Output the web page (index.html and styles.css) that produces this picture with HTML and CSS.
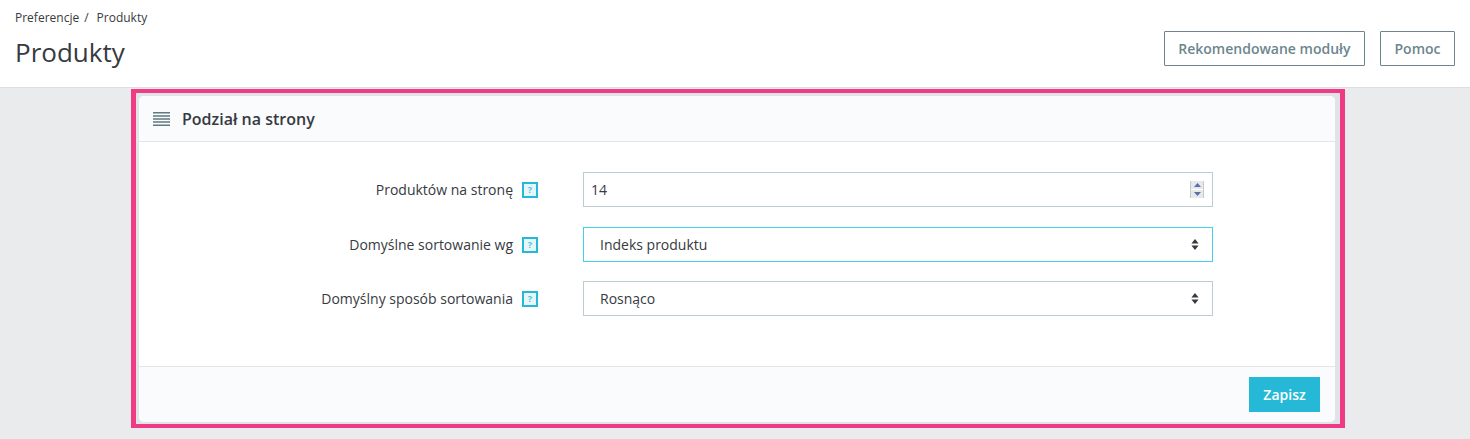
FILE: index.html
```html
<!DOCTYPE html>
<html lang="pl">
<head>
<meta charset="utf-8">
<title>Produkty</title>
<link rel="stylesheet" href="styles.css">
</head>
<body>
<header class="topbar">
  <div class="topbar-left">
    <nav class="crumbs"><span>Preferencje</span><span class="sep">/</span><span>Produkty</span></nav>
    <h1 class="title">Produkty</h1>
  </div>
  <div class="actions">
    <a class="btn-outline">Rekomendowane moduły</a>
    <a class="btn-outline">Pomoc</a>
  </div>
</header>
<main class="content">
  <div class="frame">
    <section class="card">
      <div class="card-head">
        <svg class="head-icon" width="17" height="14" viewBox="0 0 17 14"><path d="M0 .8h17M0 3.9h17M0 7h17M0 10.1h17M0 13.2h17" stroke="#5f7a83" stroke-width="1.5" fill="none"/></svg>
        <h2 class="card-title">Podział na strony</h2>
      </div>
      <div class="card-body">
        <div class="row">
          <label class="lbl">Produktów na stronę<span class="help">?</span></label>
          <div class="field number">
            <span class="val-num">14</span>
            <span class="spin"><span class="spin-b"><svg width="7" height="4" viewBox="0 0 7 4"><path d="M3.5 0L7 4H0z" fill="#5a6fa8"/></svg></span><span class="spin-b"><svg width="7" height="4" viewBox="0 0 7 4"><path d="M3.5 4L7 0H0z" fill="#5a6fa8"/></svg></span></span>
          </div>
        </div>
        <div class="row">
          <label class="lbl">Domyślne sortowanie wg<span class="help">?</span></label>
          <div class="field select focus"><span>Indeks produktu</span><svg class="updown" width="8" height="11" viewBox="0 0 8 11"><path d="M4 0l3.6 4.4H.4zM4 11L.4 6.6h7.2z" fill="#363a41"/></svg></div>
        </div>
        <div class="row last">
          <label class="lbl">Domyślny sposób sortowania<span class="help">?</span></label>
          <div class="field select"><span>Rosnąco</span><svg class="updown" width="8" height="11" viewBox="0 0 8 11"><path d="M4 0l3.6 4.4H.4zM4 11L.4 6.6h7.2z" fill="#363a41"/></svg></div>
        </div>
      </div>
      <div class="card-foot"><button class="btn-save" type="button">Zapisz</button></div>
    </section>
  </div>
</main>
</body>
</html>
```
FILE: styles.css
```css
* { box-sizing: border-box; }
html, body { margin: 0; height: 100%; }
body {
  background: #eaebec;
  font-family: "Open Sans", "Liberation Sans", sans-serif;
  color: #363a41;
  overflow: hidden;
}
.topbar {
  height: 88px;
  background: #fff;
  border-bottom: 1px solid #dfdfdf;
  display: flex;
  justify-content: space-between;
  padding: 0 15px;
}
.crumbs {
  font-size: 12px;
  line-height: 15px;
  padding-top: 10px;
  display: flex;
}
.sep { margin: 0 8px 0 5px; }
.title {
  margin: 10px 0 0;
  font-size: 26px;
  line-height: 34px;
  font-weight: 400;
}
.actions {
  display: flex;
  gap: 15px;
  padding-top: 31px;
}
.btn-outline {
  height: 35px;
  border: 1px solid #6c868e;
  border-radius: 1px;
  padding: 0 13.5px;
  font-size: 14px;
  line-height: 33px;
  font-weight: 600;
  color: #6c868e;
}
.content {
  display: flex;
  justify-content: center;
  padding: 1px 0 0 6px;
}
.frame {
  width: 1214px;
  height: 339px;
  border: 4px solid #ef3a85;
  border-left-width: 5px;
  border-right-width: 5px;
  background: #e1e4e6;
  padding: 3px 5px 2px 3px;
}
.card {
  height: 100%;
  background: #fff;
  border-radius: 5px;
  display: flex;
  flex-direction: column;
  overflow: hidden;
}
.card-head {
  height: 46px;
  flex: none;
  background: #fafbfc;
  border-bottom: 1px solid #e1e6e8;
  display: flex;
  align-items: center;
  padding-left: 14px;
  gap: 12px;
}
.head-icon { flex: none; }
.card-title {
  margin: 0;
  font-size: 16px;
  line-height: 22px;
  font-weight: 600;
}
.card-body {
  flex: 1;
  padding-top: 30px;
  display: flex;
  flex-direction: column;
  gap: 20px;
}
.row {
  display: flex;
  align-items: center;
  height: 35px;
}
.row.last { margin-top: -1px; }
.lbl {
  width: 399px;
  display: flex;
  justify-content: flex-end;
  align-items: center;
  font-size: 14px;
  line-height: 19px;
  white-space: nowrap;
}
.help {
  width: 16px;
  height: 16px;
  margin-left: 9px;
  border: 2px solid #25b9d7;
  background: #e6f6f9;
  color: #4cc6df;
  font-size: 9px;
  line-height: 12px;
  font-weight: 700;
  text-align: center;
  flex: none;
}
.field {
  width: 630px;
  height: 35px;
  margin-left: 45px;
  border: 1px solid #bbcdd2;
  background: #fff;
  font-size: 14px;
  display: flex;
  align-items: center;
  justify-content: space-between;
}
.number { padding: 0 8px 0 7px; }
.select { padding: 0 13px 0 16px; }
.focus { border-color: #3ed2f0; }
.spin {
  width: 14px;
  height: 17px;
  display: flex;
  flex-direction: column;
  gap: 1px;
  background: #fff;
  border-left: 1px solid #c4c8cc;
  border-right: 1px solid #c4c8cc;
}
.spin-b {
  flex: 1;
  background: #e6e8ea;
  display: flex;
  align-items: center;
  justify-content: center;
}
.updown { flex: none; }
.card-foot {
  height: 56px;
  flex: none;
  background: #fafbfc;
  border-top: 1px solid #e1e6e8;
  display: flex;
  justify-content: flex-end;
  align-items: flex-start;
  padding: 10px 15px 0 0;
}
.btn-save {
  width: 71px;
  height: 35px;
  border: 0;
  background: #25b9d7;
  color: #fff;
  font-family: inherit;
  font-size: 14px;
  font-weight: 600;
  padding: 0;
}
```
